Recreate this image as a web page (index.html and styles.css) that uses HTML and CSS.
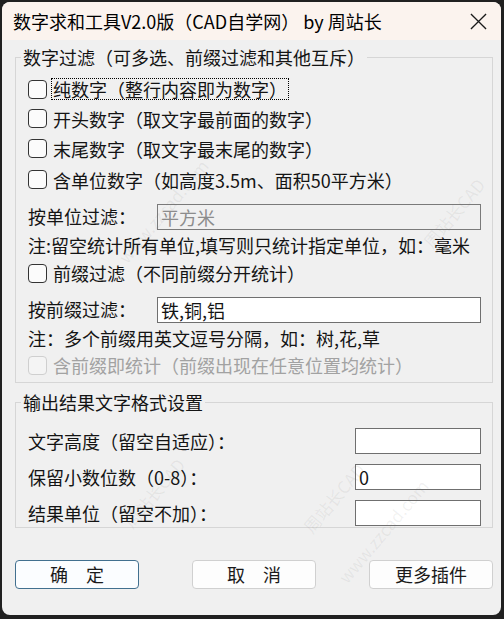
FILE: index.html
```html
<!DOCTYPE html>
<html lang="zh-CN">
<head>
<meta charset="utf-8">
<title>数字求和工具</title>
<link rel="stylesheet" href="styles.css">
</head>
<body>
<div class="window">
  <div class="titlebar">
    <span class="title">数字求和工具V2.0版（CAD自学网） by 周站长</span>
    <svg class="close" viewBox="0 0 18 18" aria-hidden="true"><path d="M1 1 L17 17 M17 1 L1 17" stroke="#1a1a1a" stroke-width="1.4" fill="none"/></svg>
  </div>
  <div class="content">
    <fieldset class="group">
      <legend>数字过滤（可多选、前缀过滤和其他互斥）</legend>
      <div class="inner inner1">
        <div class="cbrow h30"><span class="cb"></span><span class="lbl focus">纯数字（整行内容即为数字）</span></div>
        <div class="cbrow h29"><span class="cb"></span><span class="lbl">开头数字（取文字最前面的数字）</span></div>
        <div class="cbrow h31"><span class="cb"></span><span class="lbl">末尾数字（取文字最末尾的数字）</span></div>
        <div class="cbrow h31"><span class="cb"></span><span class="lbl">含单位数字（如高度3.5m、面积50平方米）</span></div>
        <div class="field mt9"><span class="flabel">按单位过滤：</span><span class="box wide dim">平方米</span></div>
        <div class="note">注:留空统计所有单位,填写则只统计指定单位，如：毫米</div>
        <div class="cbrow h26"><span class="cb"></span><span class="lbl">前缀过滤（不同前缀分开统计）</span></div>
        <div class="field mt11"><span class="flabel">按前缀过滤：</span><span class="box wide">铁,铜,铝</span></div>
        <div class="note">注：多个前缀用英文逗号分隔，如：树,花,草</div>
        <div class="cbrow h24 disabled"><span class="cb"></span><span class="lbl">含前缀即统计（前缀出现在任意位置均统计）</span></div>
      </div>
    </fieldset>
    <fieldset class="group group2">
      <legend>输出结果文字格式设置</legend>
      <div class="inner inner2">
        <div class="field"><span class="flabel grow">文字高度（留空自适应）：</span><span class="box narrow"></span></div>
        <div class="field mt10"><span class="flabel grow">保留小数位数（0-8）：</span><span class="box narrow">0</span></div>
        <div class="field mt10"><span class="flabel grow">结果单位（留空不加）：</span><span class="box narrow"></span></div>
      </div>
    </fieldset>
    <div class="buttons">
      <div class="btn primary">确　定</div>
      <div class="btn">取　消</div>
      <div class="btn">更多插件</div>
    </div>
  </div>
  <span class="wm wm1">www.zzcad.com</span>
  <span class="wm wm2">周站长CAD</span>
  <span class="wm wm3">周站长CAD</span>
  <span class="wm wm4">www.zzcad.com</span>
  <span class="wm wm5">周站长CAD</span>
</div>
</body>
</html>
```
FILE: styles.css
```css
* { box-sizing: border-box; }
html, body { margin: 0; padding: 0; }
body {
  width: 504px;
  height: 619px;
  overflow: hidden;
  background: #202020;
  font-family: "Noto Sans CJK SC", "Noto Sans", sans-serif;
  font-size: 18px;
  color: #141414;
}
.window {
  position: relative;
  margin: 2px 3px 0 2px;
  height: 613px;
  background: #f0f0f0;
  border-radius: 8px;
  overflow: hidden;
}
.titlebar {
  height: 38px;
  background: #fbf3ee;
  display: flex;
  align-items: center;
  justify-content: space-between;
  padding: 0 14px 0 11px;
}
.title {
  font-size: 18px;
  line-height: 22px;
  color: #000;
  white-space: nowrap;
}
.close { width: 17px; height: 17px; display: block; }
.content { padding: 8px 8px 0 13px; }
.group {
  margin: 0;
  padding: 0;
  border: 1px solid #d6d6d6;
  min-width: 0;
}
.group legend {
  margin-left: 5px;
  padding: 0 2px;
  line-height: 18px;
  font-size: 18px;
  color: #141414;
}
.group2 { margin-top: 10px; }
.inner1 { padding: 8px 11px 5px 12px; }
.inner2 { padding: 17px 11px 1px 12px; }
.cbrow {
  display: flex;
  align-items: center;
  gap: 4px;
  white-space: nowrap;
}
.h30 { height: 30px; }
.h29 { height: 29px; }
.h31 { height: 31px; }
.h26 { height: 26px; }
.h24 { height: 24px; }
.cb {
  width: 19px;
  height: 19px;
  flex: 0 0 19px;
  border: 1px solid #333;
  border-radius: 4px;
  background: #fbfbfb;
}
.lbl { line-height: 20px; padding: 0 1px; border: 1px solid transparent; }
.lbl.focus { border: 1px dotted #000; }
.disabled .cb { border-color: #cfcfcf; background: #f4f4f4; }
.disabled .lbl { color: #a2a2a2; }
.field { display: flex; align-items: center; white-space: nowrap; }
.mt9 { margin-top: 9px; }
.mt10 { margin-top: 10px; }
.mt11 { margin-top: 11px; }
.flabel { flex: 0 0 129px; line-height: 20px; margin-top: -3px; }
.flabel.grow { flex: 1 1 auto; margin-top: 0; }
.box {
  display: block;
  height: 26px;
  border: 1px solid #6f6f6f;
  background: #fff;
  line-height: 24px;
  padding: 0 3px;
  color: #141414;
  overflow: hidden;
}
.wide { flex: 0 0 324px; }
.narrow { flex: 0 0 126px; }
.box.dim { background: #f0f0f0; color: #8c8c8c; border-color: #7a7a7a; }
.note { height: 30px; line-height: 30px; white-space: nowrap; }
.buttons {
  display: flex;
  justify-content: space-between;
  margin-top: 32px;
}
.btn {
  width: 124px;
  height: 29px;
  border: 1px solid #d0d0d0;
  border-radius: 4px;
  background: #fdfdfd;
  text-align: center;
  line-height: 27px;
  color: #1a1a1a;
}
.btn.primary {
  border-color: #42708f;
  background: #fbfdff;
}
.wm {
  position: absolute;
  font-size: 17px;
  color: rgba(110, 110, 110, 0.09);
  white-space: nowrap;
  transform: rotate(-50deg);
  transform-origin: left top;
  pointer-events: none;
}
.wm1 { left: 110px; top: 250px; }
.wm2 { left: 415px; top: 235px; }
.wm3 { left: 295px; top: 520px; }
.wm4 { left: 330px; top: 570px; }
.wm5 { left: 115px; top: 515px; }
```
